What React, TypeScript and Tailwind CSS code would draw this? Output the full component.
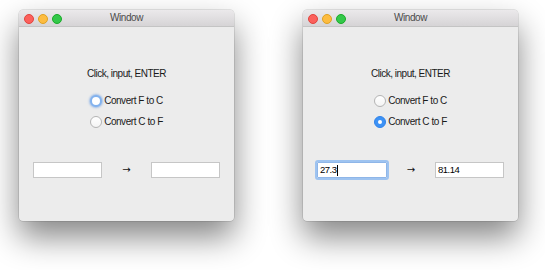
import React from 'react';

type Props = {
  checked: 'fc' | 'cf' | null;
  focusFirstRadio?: boolean;
  input: string;
  output: string;
  inputFocused?: boolean;
};

function Radio({ checked, focused }: { checked: boolean; focused?: boolean }): JSX.Element {
  if (checked) {
    return (
      <span className="w-[12px] h-[12px] rounded-full bg-[#3d92f5] border border-[#3183ea] flex items-center justify-center">
        <span className="w-[4px] h-[4px] rounded-full bg-white" />
      </span>
    );
  }
  return (
    <span
      className={
        focused
          ? 'w-[12px] h-[12px] rounded-full bg-white border-[2px] border-[#82b2ee] shadow-[0_0_2px_1px_rgba(110,160,230,0.6)]'
          : 'w-[12px] h-[12px] rounded-full bg-gradient-to-b from-white to-[#f4f4f4] border border-[#b4b4b4]'
      }
    />
  );
}

function Window({ checked, focusFirstRadio, input, output, inputFocused }: Props): JSX.Element {
  const label = 'text-[10px] tracking-[-0.45px] leading-none text-[#1a1a1a]';
  return (
    <div className="w-[215px] h-[211px] rounded-[4px] bg-[#ececec] flex flex-col overflow-hidden shadow-[0_0_0_0.5px_rgba(0,0,0,0.18),0_16px_32px_rgba(0,0,0,0.48)]">
      <div className="h-[17px] relative flex items-center justify-center bg-gradient-to-b from-[#ebe9eb] to-[#d6d4d6] border-b border-[#c4c4c4]">
        <div className="absolute left-[5px] top-[4px] flex gap-[4px]">
          <span className="w-[10px] h-[10px] rounded-full bg-[#fc605c] border-[0.5px] border-[#e0443e]" />
          <span className="w-[10px] h-[10px] rounded-full bg-[#fdbc40] border-[0.5px] border-[#dea123]" />
          <span className="w-[10px] h-[10px] rounded-full bg-[#34c84a] border-[0.5px] border-[#1aab29]" />
        </div>
        <span className="text-[10px] tracking-[-0.4px] text-[#4a4a4a] leading-none">Window</span>
      </div>
      <div className="flex flex-col items-center pt-[41px]">
        <div className="text-[10px] tracking-[-0.5px] leading-none text-[#1a1a1a] h-[12px] flex items-center">
          Click, input, ENTER
        </div>
        <div className="flex flex-col mt-[15px] gap-[9px]">
          <div className="flex items-center gap-[2px] h-[12px]">
            <Radio checked={checked === 'fc'} focused={focusFirstRadio} />
            <span className={label}>Convert F to C</span>
          </div>
          <div className="flex items-center gap-[2px] h-[12px]">
            <Radio checked={checked === 'cf'} />
            <span className={label}>Convert C to F</span>
          </div>
        </div>
      </div>
      <div className="flex items-center justify-between px-[14px] mt-[34px]">
        <div
          className={
            inputFocused
              ? 'w-[70px] h-[16px] bg-white border border-[#8fb6e8] outline outline-[2px] outline-[#9ec3f0] rounded-[1px] flex items-center px-[2px]'
              : 'w-[69px] h-[16px] bg-white border border-[#c6c6c6] flex items-center px-[2px]'
          }
        >
          <span className="text-[9.5px] tracking-[-0.5px] leading-none text-black">{input}</span>
          {inputFocused && <span className="w-px h-[11px] bg-black" />}
        </div>
        <span className="font-['DejaVu_Sans',sans-serif] text-[10px] leading-none text-[#111]">→</span>
        <div className="w-[69px] h-[16px] bg-white border border-[#c6c6c6] flex items-center px-[2px]">
          <span className="text-[9.5px] tracking-[-0.5px] leading-none text-black">{output}</span>
        </div>
      </div>
    </div>
  );
}

export default function App(): JSX.Element {
  return (
    <div className="w-[545px] h-[270px] bg-white pl-[19px] pt-[10px] flex gap-[69px] font-['Liberation_Sans',Arial,sans-serif]">
      <Window checked={null} focusFirstRadio input="" output="" />
      <Window checked="cf" input="27.3" output="81.14" inputFocused />
    </div>
  );
}
